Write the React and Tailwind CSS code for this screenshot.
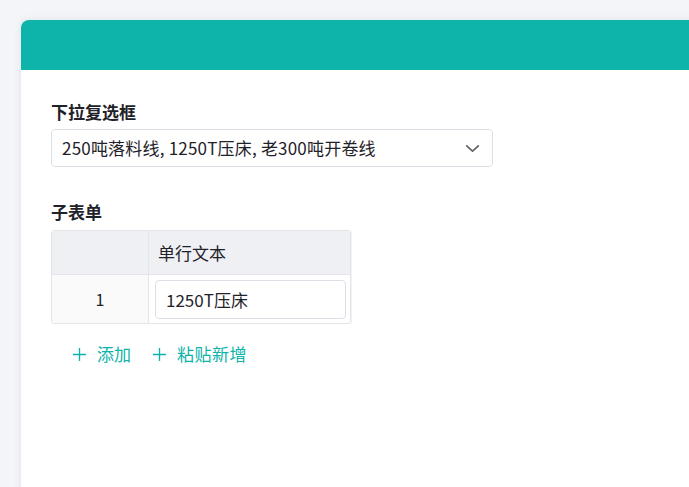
const FONT = { fontFamily: '"Noto Sans CJK SC", "Noto Sans", sans-serif' };

const Plus = () => (
  <svg className="w-[15px] h-[15px]" viewBox="0 0 16 16" fill="none" stroke="currentColor" strokeWidth={1.4}>
    <path d="M8 1v14M1 8h14" />
  </svg>
);

export default function App() {
  return (
    <div className="w-[689px] h-[487px] overflow-hidden bg-[#f4f5f8] pl-[21px] pt-[20px]" style={FONT}>
      <div className="w-[720px] h-[520px] bg-white rounded-tl-lg shadow-[0_0_8px_rgba(0,0,0,0.08)] overflow-hidden">
        {/* Header */}
        <div className="h-[50px] bg-[#0eb3a9]" />

        <div className="pl-[30px] pt-[30px] text-[#1f2329]">
          {/* Multi select */}
          <div className="text-[17px] leading-6 font-bold mb-[5px]">下拉复选框</div>
          <div className="w-[442px] h-[38px] border border-[#dcdfe6] rounded flex items-center justify-between pl-[10px] pr-[11px] text-[17px]">
            <span className="tracking-[0.2px]">250吨落料线, 1250T压床, 老300吨开卷线</span>
            <svg className="w-[17px] h-[17px] text-[#606266]" viewBox="0 0 16 16" fill="none" stroke="currentColor" strokeWidth={1.5} strokeLinecap="round" strokeLinejoin="round">
              <path d="M2.5 5.5L8 10.5l5.5-5" />
            </svg>
          </div>

          {/* Sub form */}
          <div className="text-[17px] leading-6 font-bold mt-[33px] mb-[6px]">子表单</div>
          <div className="w-[300px] border border-[#e4e5e9] rounded-[3px] overflow-hidden shadow-[1px_0_1px_rgba(0,0,0,0.06)]">
            <div className="flex h-[44px] bg-[#eff0f3] border-b border-[#e4e5e9]">
              <div className="w-[97px] border-r border-[#e4e5e9]" />
              <div className="flex-1 flex items-center pl-[9px] text-[17px]">单行文本</div>
            </div>
            <div className="flex h-[48px]">
              <div className="w-[97px] border-r border-[#e4e5e9] bg-[#fafafa] flex items-center justify-center text-[16px]">1</div>
              <div className="flex-1 pl-[6px] pr-[4px] pt-[5px] pb-[4px]">
                <div className="h-[39px] border border-[#dcdfe6] rounded flex items-center pl-[10px] text-[17px]">1250T压床</div>
              </div>
            </div>
          </div>

          {/* Actions */}
          <div className="flex items-center mt-[18px] pl-[21px] text-[17px] leading-6 text-[#0eb3a9]">
            <div className="flex items-center gap-[10px]">
              <Plus />
              <span>添加</span>
            </div>
            <div className="flex items-center gap-[10px] ml-[21px]">
              <Plus />
              <span className="tracking-[0.5px]">粘贴新增</span>
            </div>
          </div>
        </div>
      </div>
    </div>
  );
}
